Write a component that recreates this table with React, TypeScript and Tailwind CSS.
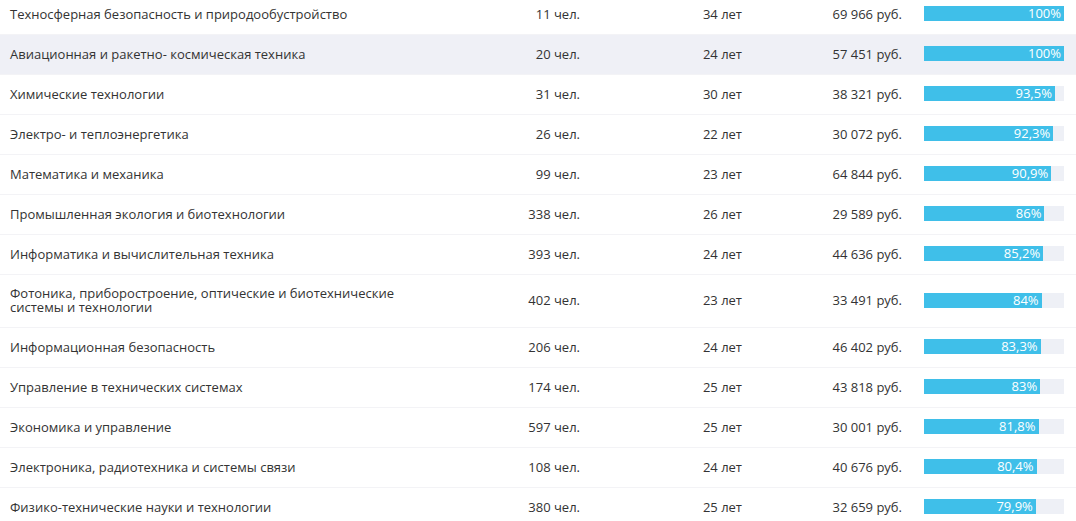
import React from 'react';

type Row = {
  name: string;
  count: number;
  age: number;
  salary: string;
  pct: number;
  label: string;
};

const rows: Row[] = [
  { name: 'Техносферная безопасность и природообустройство', count: 11, age: 34, salary: '69 966', pct: 100, label: '100%' },
  { name: 'Авиационная и ракетно- космическая техника', count: 20, age: 24, salary: '57 451', pct: 100, label: '100%' },
  { name: 'Химические технологии', count: 31, age: 30, salary: '38 321', pct: 93.5, label: '93,5%' },
  { name: 'Электро- и теплоэнергетика', count: 26, age: 22, salary: '30 072', pct: 92.3, label: '92,3%' },
  { name: 'Математика и механика', count: 99, age: 23, salary: '64 844', pct: 90.9, label: '90,9%' },
  { name: 'Промышленная экология и биотехнологии', count: 338, age: 26, salary: '29 589', pct: 86, label: '86%' },
  { name: 'Информатика и вычислительная техника', count: 393, age: 24, salary: '44 636', pct: 85.2, label: '85,2%' },
  { name: 'Фотоника, приборостроение, оптические и биотехнические системы и технологии', count: 402, age: 23, salary: '33 491', pct: 84, label: '84%' },
  { name: 'Информационная безопасность', count: 206, age: 24, salary: '46 402', pct: 83.3, label: '83,3%' },
  { name: 'Управление в технических системах', count: 174, age: 25, salary: '43 818', pct: 83, label: '83%' },
  { name: 'Экономика и управление', count: 597, age: 25, salary: '30 001', pct: 81.8, label: '81,8%' },
  { name: 'Электроника, радиотехника и системы связи', count: 108, age: 24, salary: '40 676', pct: 80.4, label: '80,4%' },
  { name: 'Физико-технические науки и технологии', count: 380, age: 25, salary: '32 659', pct: 79.9, label: '79,9%' },
];

function App() {
  return (
    <div className="min-h-screen bg-white overflow-hidden text-[13px] leading-[14px] text-[#333333] font-['Open_Sans','Liberation_Sans',sans-serif]">
      <div className="-mt-[5px]">
        {rows.map((row, i) => (
          <div
            key={row.name}
            className={
              'grid grid-cols-[430px_140px_162px_160px_140px] items-center pl-[10px] pt-[11px] pb-[13px] border-b border-[#f3f3f6] ' +
              (i === 1 ? 'bg-[#eff0f6]' : 'bg-white')
            }
          >
            <div className="max-w-[420px] leading-[14px]">{row.name}</div>
            <div className="text-right">{row.count} чел.</div>
            <div className="text-right">{row.age} лет</div>
            <div className="text-right">{row.salary} руб.</div>
            <div className="ml-[22px] h-[15px] w-[140px] bg-[#eef0f6]">
              <div
                className="h-full bg-[#3fbfe9] text-white text-right pr-[3px] leading-[15px]"
                style={{ width: `${row.pct}%` }}
              >
                {row.label}
              </div>
            </div>
          </div>
        ))}
      </div>
    </div>
  );
}

export default App;
